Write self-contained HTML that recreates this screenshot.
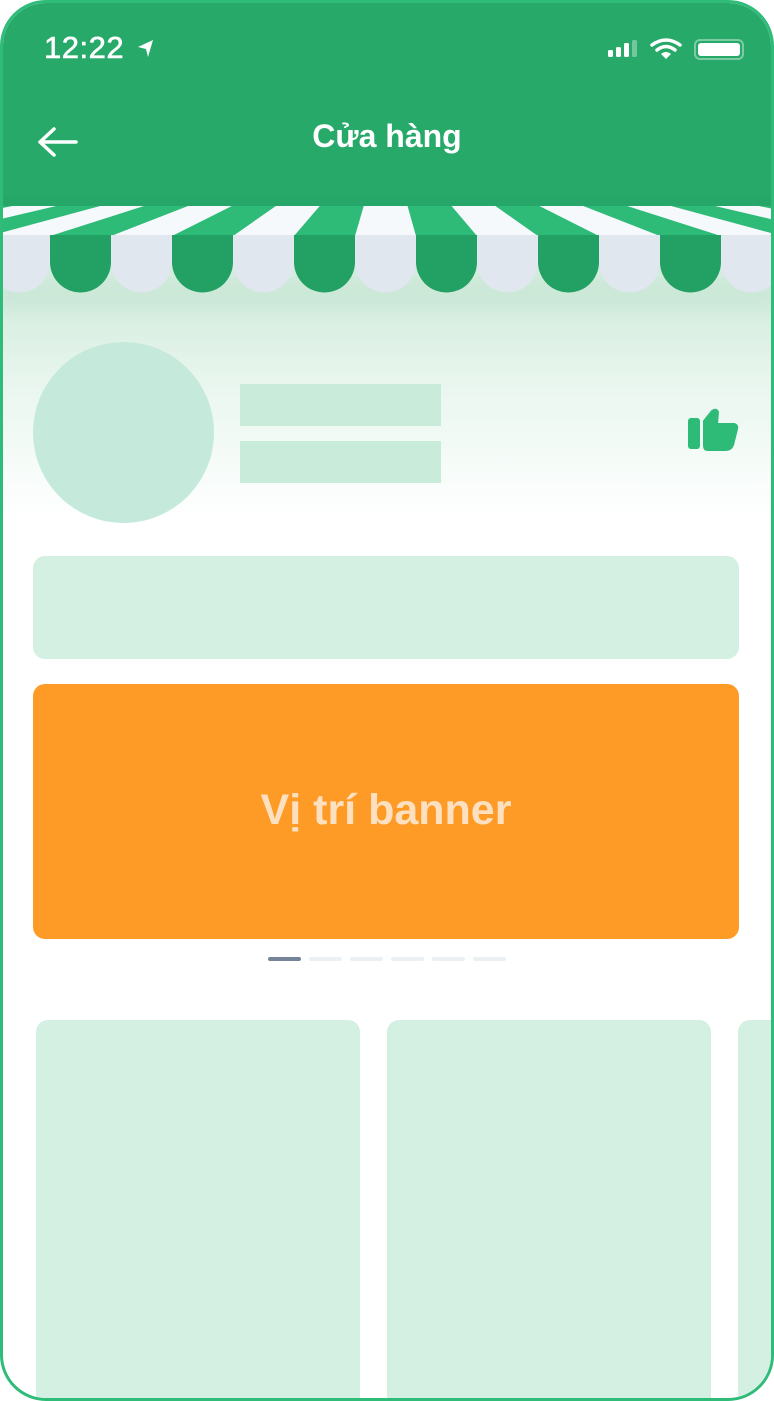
<!DOCTYPE html>
<html><head><meta charset="utf-8"><style>
*{margin:0;padding:0;box-sizing:border-box}
body{width:774px;height:1401px;background:#fff;position:relative;overflow:hidden;font-family:"Liberation Sans",sans-serif}
#ph{position:absolute;left:0;top:0;width:774px;height:1401px;border:3px solid #2fbb78;border-radius:46px;overflow:hidden;background:#fff}
.a{position:absolute}
</style></head><body>
<div id="ph">
<div class="a" style="left:-3px;top:-3px;width:774px;height:520px;background:linear-gradient(#d3ecdd 295px,#e8f6ee 380px,#ffffff 520px)"></div>
<svg class="a" style="left:-3px;top:-3px" width="774" height="320" viewBox="0 0 774 320">
<defs><filter id="sh" x="-10%" y="-10%" width="120%" height="150%"><feGaussianBlur stdDeviation="8"/></filter></defs>
<rect x="0" y="280" width="774" height="30" fill="#c6e4d3" filter="url(#sh)" opacity="0.6"/>
<rect x="0" y="0" width="774" height="206" fill="#27a96a"/>
<rect x="0" y="196" width="774" height="10" fill="#26a669"/>
<rect x="0" y="206" width="774" height="30" fill="#f5f9fc"/>
<g fill="#2ebb77" id="st"></g>
<g id="sc"></g>
</svg>
<div class="a" style="left:30px;top:339px;width:181px;height:181px;border-radius:50%;background:#c5eadb"></div>
<div class="a" style="left:237px;top:381px;width:201px;height:42px;background:#c8ebda"></div>
<div class="a" style="left:237px;top:438px;width:201px;height:42px;background:#c8ebda"></div>
<svg class="a" style="left:683px;top:404px" width="54" height="54" viewBox="0 0 54 54">
<rect x="2" y="11" width="12" height="31" rx="3" fill="#2ebb77"/>
<path d="M18 14 L26 4 Q30 1 32 5 L31 17 L48 17 Q52 18 51 22 L47 38 Q45 43 40 43 L22 43 Q18 43 18 39 Z" fill="#2ebb77" stroke="#2ebb77" stroke-width="2" stroke-linejoin="round"/>
</svg>
<div class="a" style="left:30px;top:553px;width:706px;height:103px;border-radius:12px;background:#d4f0e2"></div>
<div class="a" style="left:30px;top:681px;width:706px;height:255px;border-radius:12px;background:#fd9b26;color:#fde0c0;font-size:43px;font-weight:bold;text-align:center;line-height:252px">Vị trí banner</div>
<div class="a" style="left:265px;top:954px;width:33px;height:4px;border-radius:2px;background:#76849a"></div>
<div class="a" style="left:306px;top:954px;width:33px;height:4px;border-radius:2px;background:#ebf0f5"></div>
<div class="a" style="left:347px;top:954px;width:33px;height:4px;border-radius:2px;background:#ebf0f5"></div>
<div class="a" style="left:388px;top:954px;width:33px;height:4px;border-radius:2px;background:#ebf0f5"></div>
<div class="a" style="left:429px;top:954px;width:33px;height:4px;border-radius:2px;background:#ebf0f5"></div>
<div class="a" style="left:470px;top:954px;width:33px;height:4px;border-radius:2px;background:#ebf0f5"></div>
<div class="a" style="left:33px;top:1017px;width:324px;height:420px;border-radius:12px;background:#d4f0e2"></div>
<div class="a" style="left:384px;top:1017px;width:324px;height:420px;border-radius:12px;background:#d4f0e2"></div>
<div class="a" style="left:735px;top:1017px;width:324px;height:420px;border-radius:12px;background:#d4f0e2"></div>
<div class="a" style="left:41px;top:27px;color:#fff;font-size:31px;letter-spacing:0.5px;-webkit-text-stroke:0.6px #fff">12:22</div>
<svg class="a" style="left:133px;top:35px" width="20" height="22" viewBox="0 0 20 22"><path d="M2 9 L17 2 L12 19 L10 11 Z" fill="#fff"/></svg>
<svg class="a" style="left:603px;top:35px" width="140" height="24" viewBox="0 0 140 24">
<rect x="2" y="12" width="5" height="7" rx="1.5" fill="#fff"/><rect x="10" y="9" width="5" height="10" rx="1.5" fill="#fff"/><rect x="18" y="5" width="5" height="14" rx="1.5" fill="#fff"/><rect x="26" y="2" width="5" height="17" rx="1.5" fill="#fff" opacity="0.35"/>
<path d="M46 7 Q60 -3 74 7" stroke="#fff" stroke-width="3.5" fill="none" stroke-linecap="round"/>
<path d="M51 12 Q60 5 69 12" stroke="#fff" stroke-width="3.5" fill="none" stroke-linecap="round"/>
<path d="M55 16 L60 21 L65 16 Q60 12 55 16Z" fill="#fff"/>
<rect x="89" y="2" width="48" height="19" rx="5" fill="none" stroke="#fff" stroke-opacity="0.4" stroke-width="2"/>
<rect x="92" y="5" width="42" height="13" rx="3" fill="#fff"/>
</svg>
<svg class="a" style="left:33px;top:122px" width="46" height="34" viewBox="0 0 46 34"><path d="M4 17 H40 M18 4 L4 17 L18 30" stroke="#fff" stroke-width="3.5" fill="none" stroke-linecap="round" stroke-linejoin="round"/></svg>
<div class="a" style="left:0;top:115px;width:768px;text-align:center;color:#fff;font-size:32px;font-weight:bold">Cửa hàng</div>
</div>
<script>
var st=document.getElementById('st'),sc=document.getElementById('sc'),ns='http://www.w3.org/2000/svg';
for(var k=-3;k<=8;k++){var bc=80.5+122*k,tc=386+(bc-386)*0.72;
var p=document.createElementNS(ns,'polygon');p.setAttribute('points',(tc-22)+',206 '+(tc+22)+',206 '+(bc+30.5)+',236 '+(bc-30.5)+',236');st.appendChild(p);}
for(var k=-1;k<=13;k++){var x=-11+61*k;var dark=(k%2==1);
var r=document.createElementNS(ns,'path');r.setAttribute('d','M'+x+' 235 H'+(x+61)+' V262 A30.5 30.5 0 0 1 '+x+' 262 Z');r.setAttribute('fill',dark?'#23a064':'#e1e7ef');sc.appendChild(r);}
</script>
</body></html>
